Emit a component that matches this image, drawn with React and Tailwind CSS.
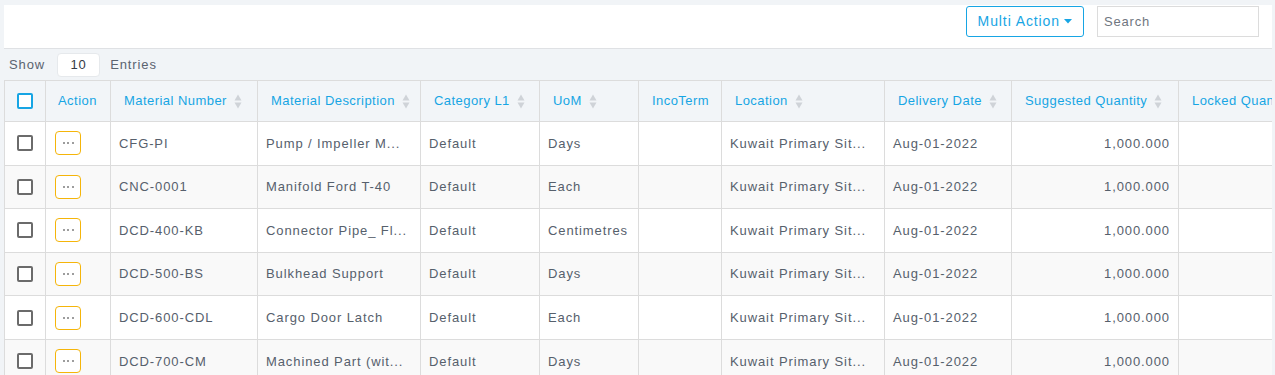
import { useState } from 'react'

const COLUMNS = [
  { key: 'material', label: 'Material Number', width: 147, sort: true },
  { key: 'desc', label: 'Material Description', width: 163, sort: true },
  { key: 'category', label: 'Category L1', width: 119, sort: true },
  { key: 'uom', label: 'UoM', width: 99, sort: true },
  { key: 'inco', label: 'IncoTerm', width: 83, sort: false },
  { key: 'location', label: 'Location', width: 163, sort: true },
  { key: 'date', label: 'Delivery Date', width: 127, sort: true },
  { key: 'qty', label: 'Suggested Quantity', width: 167, sort: true, right: true },
  { key: 'locked', label: 'Locked Quantity', width: 170, sort: true, right: true },
]

const ROWS = [
  { material: 'CFG-PI', desc: 'Pump / Impeller M...', uom: 'Days' },
  { material: 'CNC-0001', desc: 'Manifold Ford T-40', uom: 'Each' },
  { material: 'DCD-400-KB', desc: 'Connector Pipe_ Fl...', uom: 'Centimetres' },
  { material: 'DCD-500-BS', desc: 'Bulkhead Support', uom: 'Days' },
  { material: 'DCD-600-CDL', desc: 'Cargo Door Latch', uom: 'Each' },
  { material: 'DCD-700-CM', desc: 'Machined Part (wit...', uom: 'Days' },
].map(r => ({
  ...r,
  category: 'Default',
  inco: '',
  location: 'Kuwait Primary Sit...',
  date: 'Aug-01-2022',
  qty: '1,000.000',
  locked: '',
}))

function SortIcon() {
  return (
    <svg className="ml-[7px] inline-block w-[8px] h-[15px] align-middle" viewBox="0 0 8 15" fill="#cfd3d8">
      <path d="M4 0.5L7.5 6.5H0.5Z" />
      <path d="M4 14.5L7.5 8.5H0.5Z" />
    </svg>
  )
}

function Checkbox({ header }) {
  const [on, setOn] = useState(false)
  return (
    <button
      onClick={() => setOn(!on)}
      className={`block mx-auto w-[16px] h-[16px] rounded-[2px] border-2 ${
        header ? 'border-[#17a5e4]' : 'border-[#6b6b6b]'
      } ${on ? 'bg-[#17a5e4]' : 'bg-white'}`}
    />
  )
}

function ActionButton() {
  return (
    <button className="flex items-center justify-center gap-[2.5px] w-[26px] h-[24px] rounded-[4px] border border-[#f5b50a] bg-white">
      <span className="w-[2px] h-[2px] rounded-full bg-[#7c7c7c]" />
      <span className="w-[2px] h-[2px] rounded-full bg-[#7c7c7c]" />
      <span className="w-[2px] h-[2px] rounded-full bg-[#7c7c7c]" />
    </button>
  )
}

export default function App() {
  const [entries, setEntries] = useState('10')
  const [search, setSearch] = useState('')

  return (
    <div
      className="min-h-screen bg-[#f1f4f7] pt-[5px] pl-[4px] pr-[3px] text-[13px]"
      style={{ fontFamily: '"Liberation Sans", Arial, sans-serif' }}
    >
      <div className="flex items-start justify-end h-[44px] bg-white border-b border-[#dfe1e4] pr-[13px] pt-[1px]">
        <button className="flex items-center h-[31px] pl-[11px] pr-[11px] mr-[13px] rounded-[3px] border border-[#17a5e4] text-[#17a5e4] text-[14px] tracking-[0.9px]">
          Multi Action
          <svg className="ml-[4px] w-[8px] h-[5px]" viewBox="0 0 8 5" fill="#17a5e4">
            <path d="M0 0H8L4 4.5Z" />
          </svg>
        </button>
        <input
          value={search}
          onChange={e => setSearch(e.target.value)}
          placeholder="Search"
          className="w-[162px] h-[31px] px-[6px] border border-[#dcdcdc] bg-white text-[13px] tracking-[0.8px] text-[#555] placeholder:text-[#6f7680] focus:outline-none"
        />
      </div>

      <div className="flex items-center h-[31px] tracking-[0.9px] text-[#5a6370]">
        <span className="ml-[5px]">Show</span>
        <input
          value={entries}
          onChange={e => setEntries(e.target.value)}
          className="w-[43px] h-[24px] ml-[12px] mr-[10px] rounded-[4px] border border-[#e6e9ec] bg-white text-center text-[#333a45] focus:outline-none"
        />
        <span>Entries</span>
      </div>

      <div className="overflow-hidden">
        <table className="table-fixed border-collapse w-[1500px] text-left">
          <colgroup>
            <col className="w-[41px]" />
            <col className="w-[65px]" />
            {COLUMNS.map(c => (
              <col key={c.key} style={{ width: c.width }} />
            ))}
            <col />
          </colgroup>
          <thead>
            <tr className="h-[41px] bg-[#f2f5f8] text-[#17a5e4] tracking-[0.45px]">
              <th className="border border-[#dcdcdc] font-normal">
                <Checkbox header />
              </th>
              <th className="border border-[#dcdcdc] font-normal pl-[12px]">Action</th>
              {COLUMNS.map(c => (
                <th key={c.key} className="border border-[#dcdcdc] font-normal pl-[13px] whitespace-nowrap overflow-hidden">
                  {c.label}
                  {c.sort && <SortIcon />}
                </th>
              ))}
              <th className="border border-[#dcdcdc]" />
            </tr>
          </thead>
          <tbody className="text-[#56606c] tracking-[0.9px]">
            {ROWS.map((r, i) => (
              <tr key={r.material} className={`h-[43.6px] ${i % 2 ? 'bg-[#f9f9f9]' : 'bg-white'}`}>
                <td className="border border-[#dcdcdc]">
                  <Checkbox />
                </td>
                <td className="border border-[#dcdcdc] pl-[9px]">
                  <ActionButton />
                </td>
                {COLUMNS.map(c => (
                  <td
                    key={c.key}
                    className={`border border-[#dcdcdc] whitespace-nowrap overflow-hidden ${
                      c.right ? 'text-right pr-[8px]' : 'pl-[8px]'
                    }`}
                  >
                    {r[c.key]}
                  </td>
                ))}
                <td className="border border-[#dcdcdc]" />
              </tr>
            ))}
          </tbody>
        </table>
      </div>
    </div>
  )
}
